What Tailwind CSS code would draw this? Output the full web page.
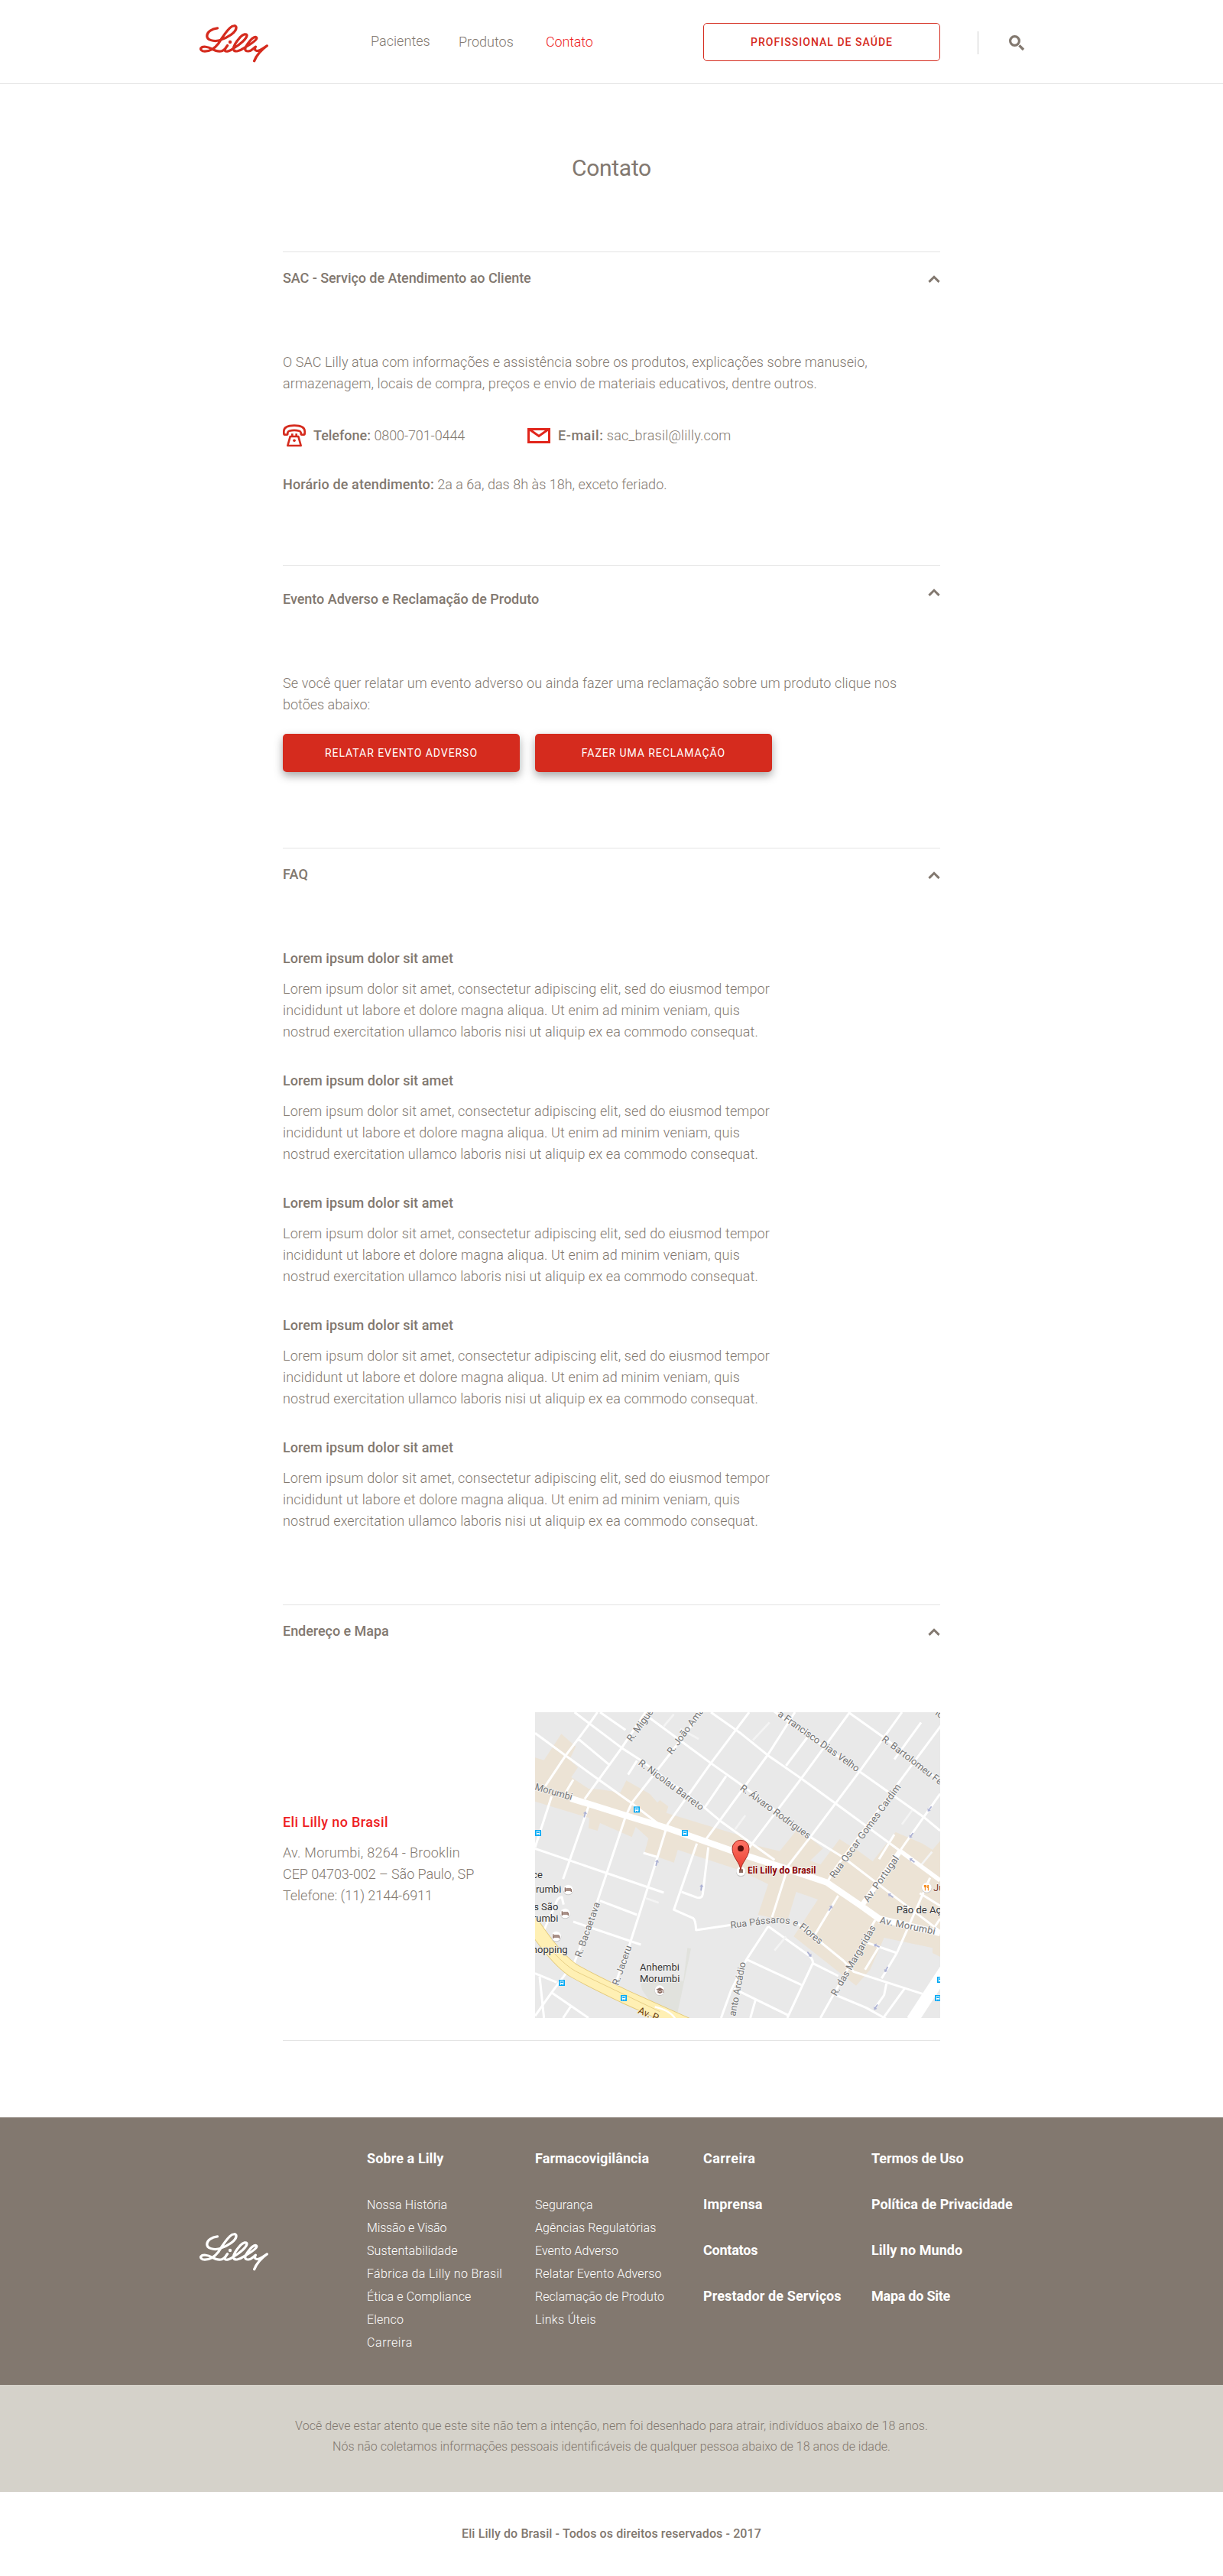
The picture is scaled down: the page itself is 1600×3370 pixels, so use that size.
<!DOCTYPE html>
<html lang="pt-BR">
<head>
<meta charset="utf-8">
<title>Contato - Lilly</title>
<script src="https://cdn.jsdelivr.net/npm/@tailwindcss/browser@4"></script>
</head>
<body class="bg-white font-[Roboto,sans-serif] text-[#82786f] text-lg leading-7 font-light">
<svg class="hidden">
  <symbol id="lilly" viewBox="0 0 90 49" overflow="visible">
    <g transform="scale(.3571 .3333) translate(-58.5 -94.5)" fill="none" stroke="currentColor" stroke-width="9.5" stroke-linecap="round" stroke-linejoin="round">
      <path d="M124 109C104 111 86 124 86 140C86 155 110 163 131 157C162 147 193 125 193 107C193 97 181 97 170 108C152 127 140 149 128 169C113 190 95 200 78 200C66 200 61 193 64 187C70 178 90 182 103 190C118 199 132 202 142 198C150 194 155 187 161 177C154 186 150 192 152 198C157 204 172 197 183 188C208 172 232 150 232 137C231 130 219 131 208 144C194 161 182 178 183 191C185 204 204 201 218 189C240 176 268 158 268 148C267 139 253 145 244 158C232 173 224 184 226 193C229 203 244 201 254 191L264 182C259 190 261 197 268 198C280 199 292 187 306 178C288 192 268 214 259 238"/>
    </g>
    <circle cx="40" cy="23" r="2.2" fill="currentColor"/>
  </symbol>
  <symbol id="caret" viewBox="0 0 16 10"><path d="M1.4 8.9L8 2.3L14.6 8.9" fill="none" stroke="#82786f" stroke-width="3"/></symbol>
</svg>

<header class="flex h-[110px] border-b border-[#e4e4e4] pl-[261px]">
  <svg class="mt-8 h-[49px] w-[90px] overflow-visible text-[#d52b1e]"><use href="#lilly"/></svg>
  <nav class="flex pt-10 pl-[134px]">
    <a class="w-[115px] tracking-[0.04px]">Pacientes</a>
    <a class="w-[113px] pt-px">Produtos</a>
    <a class="w-[207px] pt-px pl-px tracking-[-0.17px] text-[#ee1d23]">Contato</a>
  </nav>
  <a class="mt-[30px] h-[50px] w-[310px] rounded-[5px] border border-[#d52b1e] text-center text-sm leading-[48px] font-medium tracking-[1.03px] text-[#d52b1e]">PROFISSIONAL DE SAÚDE</a>
  <div class="mt-[41px] ml-[49px] h-[30px] w-px bg-[#ccc]"></div>
  <svg class="mt-[45px] ml-[39px] size-[22px]" fill="none" stroke="#82786f"><circle cx="8.5" cy="8.5" r="5.9" stroke-width="3.2"/><path d="M14.4 14.4L20 20" stroke-width="3.4"/></svg>
</header>

<main class="mx-auto w-[860px]">
  <h1 class="mt-[90px] text-center text-3xl leading-10 font-normal tracking-[-0.31px]">Contato</h1>

  <section class="mt-[89px] h-[410px] border-t border-[#e4e4e4] pt-5">
    <div class="flex justify-between">
      <h2 class="font-medium tracking-[-0.06px]">SAC - Serviço de Atendimento ao Cliente</h2>
      <svg class="mt-2.5 h-2.5 w-4"><use href="#caret"/></svg>
    </div>
    <p class="mt-[82px] whitespace-nowrap"><span class="tracking-[0.08px]">O SAC Lilly atua com informações e assistência sobre os produtos, explicações sobre manuseio,</span><br><span class="tracking-[0.13px]">armazenagem, locais de compra, preços e envio de materiais educativos, dentre outros.</span></p>
    <div class="mt-10 flex h-7">
      <svg class="-mt-px h-[30px] w-[30px]" viewBox="30 30 90 88" fill="none" stroke="#d52b1e" stroke-width="8" stroke-linejoin="round"><path d="M46 70H37Q34 70 34 65V56Q35 34 75 34Q115 34 116 56V65Q116 70 113 70H104Q101 70 101 66V62Q100 57 94 55Q75 50 56 55Q50 57 49 62V66Q49 70 46 70Z"/><path d="M59 77H91L101 113H49ZM67 66V76M83 66V76"/><circle cx="75" cy="93" r="5.5" fill="#d52b1e" stroke="none"/></svg>
      <p class="w-[290px] pl-2.5"><span class="font-medium">Telefone:</span> <span class="tracking-[-0.1px]">0800-701-0444</span></p>
      <svg class="mt-1 h-5 w-[30px]" viewBox="0 0 30 20" fill="none" stroke="#e1251b" stroke-width="3"><path d="M1.5 1.5H28.5V18.5H1.5ZM3 2L15 10.5L27 2"/></svg>
      <p class="pl-2.5"><span class="font-medium tracking-[0.55px]">E-mail:</span> <span class="tracking-[0.22px]">sac_brasil@lilly.com</span></p>
    </div>
    <p class="mt-9"><span class="font-medium tracking-[0.13px]">Horário de atendimento:</span> <span class="tracking-[0.02px]">2a a 6a, das 8h às 18h, exceto feriado.</span></p>
  </section>

  <section class="h-[370px] border-t border-[#e4e4e4] pt-[30px]">
    <div class="flex justify-between">
      <h2 class="font-medium tracking-[-0.02px]">Evento Adverso e Reclamação de Produto</h2>
      <svg class="h-2.5 w-4"><use href="#caret"/></svg>
    </div>
    <p class="mt-[82px] whitespace-nowrap"><span class="tracking-[0.106px]">Se você quer relatar um evento adverso ou ainda fazer uma reclamação sobre um produto clique nos</span><br>botões abaixo:</p>
    <div class="mt-6 flex gap-5 text-center text-sm leading-[50px] font-normal text-white">
      <a class="h-[50px] w-[310px] rounded-[5px] bg-[#d52b1e] tracking-[0.95px] shadow-[0_5px_12px_rgba(0,0,0,0.35)]">RELATAR EVENTO ADVERSO</a>
      <a class="h-[50px] w-[310px] rounded-[5px] bg-[#d52b1e] tracking-[0.92px] shadow-[0_5px_12px_rgba(0,0,0,0.35)]">FAZER UMA RECLAMAÇÃO</a>
    </div>
  </section>

  <section class="h-[990px] border-t border-[#e4e4e4] pt-5">
    <div class="flex justify-between">
      <h2 class="font-medium tracking-[0.17px]">FAQ</h2>
      <svg class="mt-2.5 h-2.5 w-4"><use href="#caret"/></svg>
    </div>
    <div class="mt-[82px] flex flex-col gap-9 whitespace-nowrap">
      <article><h3 class="mb-3 font-medium tracking-[0.06px]">Lorem ipsum dolor sit amet</h3><p class="tracking-[0.14px]">Lorem ipsum dolor sit amet, consectetur adipiscing elit, sed do eiusmod tempor<br><span class="tracking-[0.165px]">incididunt ut labore et dolore magna aliqua. Ut enim ad minim veniam, quis</span><br><span class="tracking-[0.12px]">nostrud exercitation ullamco laboris nisi ut aliquip ex ea commodo consequat.</span></p></article>
      <article><h3 class="mb-3 font-medium tracking-[0.06px]">Lorem ipsum dolor sit amet</h3><p class="tracking-[0.14px]">Lorem ipsum dolor sit amet, consectetur adipiscing elit, sed do eiusmod tempor<br><span class="tracking-[0.165px]">incididunt ut labore et dolore magna aliqua. Ut enim ad minim veniam, quis</span><br><span class="tracking-[0.12px]">nostrud exercitation ullamco laboris nisi ut aliquip ex ea commodo consequat.</span></p></article>
      <article><h3 class="mb-3 font-medium tracking-[0.06px]">Lorem ipsum dolor sit amet</h3><p class="tracking-[0.14px]">Lorem ipsum dolor sit amet, consectetur adipiscing elit, sed do eiusmod tempor<br><span class="tracking-[0.165px]">incididunt ut labore et dolore magna aliqua. Ut enim ad minim veniam, quis</span><br><span class="tracking-[0.12px]">nostrud exercitation ullamco laboris nisi ut aliquip ex ea commodo consequat.</span></p></article>
      <article><h3 class="mb-3 font-medium tracking-[0.06px]">Lorem ipsum dolor sit amet</h3><p class="tracking-[0.14px]">Lorem ipsum dolor sit amet, consectetur adipiscing elit, sed do eiusmod tempor<br><span class="tracking-[0.165px]">incididunt ut labore et dolore magna aliqua. Ut enim ad minim veniam, quis</span><br><span class="tracking-[0.12px]">nostrud exercitation ullamco laboris nisi ut aliquip ex ea commodo consequat.</span></p></article>
      <article><h3 class="mb-3 font-medium tracking-[0.06px]">Lorem ipsum dolor sit amet</h3><p class="tracking-[0.14px]">Lorem ipsum dolor sit amet, consectetur adipiscing elit, sed do eiusmod tempor<br><span class="tracking-[0.165px]">incididunt ut labore et dolore magna aliqua. Ut enim ad minim veniam, quis</span><br><span class="tracking-[0.12px]">nostrud exercitation ullamco laboris nisi ut aliquip ex ea commodo consequat.</span></p></article>
    </div>
  </section>

  <section class="h-[571px] border-y border-[#e4e4e4] pt-5">
    <div class="flex justify-between">
      <h2 class="font-medium tracking-[-0.04px]">Endereço e Mapa</h2>
      <svg class="mt-2.5 h-2.5 w-4"><use href="#caret"/></svg>
    </div>
    <div class="mt-[92px] flex">
      <div class="w-[330px] pt-[130px]">
        <h3 class="mb-3 font-medium tracking-[0.37px] text-[#ee1d23]">Eli Lilly no Brasil</h3>
        <p><span class="tracking-[0.27px]">Av. Morumbi, 8264 - Brooklin</span><br><span class="tracking-[-0.06px]">CEP 04703-002 – São Paulo, SP</span><br><span class="tracking-[-0.04px]">Telefone: (11) 2144-6911</span></p>
      </div>
      <svg class="h-[400px] w-[530px]" viewBox="30 30 1590 1200">
        <defs>
          <linearGradient id="pin" x1="0" y1="0" x2="0" y2="1"><stop offset="0" stop-color="#ff7566"/><stop offset="1" stop-color="#e83c30"/></linearGradient>
          <g id="bus"><path d="M0 0h24v24H0z" fill="#03a9f4"/><path d="M5 4h14v13H5z" fill="#fff"/><path d="M7 7h10v5H7z" fill="#03a9f4"/><path d="M6 17h3v3H6zM15 17h3v3h-3z" fill="#fff"/></g>
          <g id="bed"><circle r="20" cy="2" fill="#c9c9c9"/><circle r="19" fill="#fff"/><path d="M-12-8V9M-12 3H12M12-2V9M-9-3h20" fill="none" stroke="#8d6e63" stroke-width="4"/></g>
          <path id="arr" d="M0-12L8-2H3L2 13H-3V-2H-8Z" fill="#adb2d4"/>
          <path id="passaros" d="M798 878C880 870 960 850 1030 862C1068 870 1090 900 1160 952"/>
        </defs>
        <path d="M30 30h1590v1200H30z" fill="#e9e9e9"/>
        <path d="M445 1095L530 1075L612 1085L628 955L642 958L585 1230L500 1190L450 1120Z" fill="#e1e2dd"/>
        <path d="M30 208L65 218L133 115L190 165L165 215L198 247L172 285L240 330L285 333L365 345L388 298L480 350L510 385L520 375L553 400L545 425L840 515L885 550L990 575L1055 495L1112 525L1160 565L1110 612L1150 628L1225 528L1300 575L1355 615L1445 500L1550 545L1590 570L1620 535V990L1590 975V955L1400 915L1345 1040L1290 1103L1045 910L1140 765L1055 735L1020 850L905 825L945 705L835 650L590 570L575 620L460 580L475 525L425 480L410 520L285 465L275 495L240 485L243 445L30 380Z" fill="#ece3d5"/>
        <g fill="none" stroke="#fff" stroke-width="9" stroke-linejoin="round">
          <path d="M720 30L840 115L945 200L1075 290L1205 385L1460 572M185 30L370 170L440 215L690 400L755 455L970 610M285 30L385 100M470 45L720 230L840 315L1110 520L1240 600L1430 745L1620 890M30 112L150 200L280 295L400 380L510 465M930 0L1300 260L1560 445L1620 495M1260 30L1400 130L1620 300"/>
          <path d="M275 30L240 80L150 200L70 320M470 20L370 170L225 370M240 400L140 685M690 20L570 180L410 385L385 440L275 770L185 1010L95 1130L30 1222M870 30L720 230L550 470L510 600L400 945L340 1110M1050 30L945 195L755 455L700 530M665 545L575 805L650 838Q660 845 662 885L800 865M710 560L688 745Q685 762 665 757L605 735M1265 30L1075 290L860 575M1470 30L1305 260L1110 520L1025 630L960 835M1625 80L1410 370L1210 640L1175 700M1620 350L1465 570M1545 70L1440 215M1105 120L1015 240M780 280L695 405M200 135L320 235M180 295L150 345M430 220L395 275M95 360L30 560"/>
          <path d="M30 565L535 738M285 770L430 825M180 852L445 942M455 582L510 598M1220 750L1130 900M1365 845L1150 1230M945 870L1105 985Q1122 1000 1120 1015L1020 1230M1120 1015L1220 1065M945 870L860 1000L800 1120L760 1230M860 1000L1075 1100M810 1115L1025 1220M895 1160L875 1230M1050 850L1240 1005L1280 1048L1550 1135M1210 1140L1330 1190L1410 1235M1410 1090L1400 1140L1365 1190M1480 1115L1400 1225M1335 935L1450 975M1390 1075L1450 975L1580 680M1325 1040L1380 950M1380 607L1440 510M1540 740L1620 790M1600 870L1620 840M30 1055L115 1090M48 1068L65 1230M95 1130L240 1230M170 1185L140 1230M65 885L110 785Q118 755 135 755L142 785"/>
        </g>
        <g fill="none" stroke="#f4f4f4" stroke-width="8"><path d="M950 70L885 140M1015 910L970 965M575 38L535 85M600 95L672 135M465 760L515 778M855 435L815 490M1510 415L1470 470M1588 578L1545 630"/></g>
        <g fill="none" stroke="#fff" stroke-linejoin="round">
          <path d="M170 368L385 435L550 485L835 585L990 635L1175 698L1310 790L1380 840L1620 897" stroke-width="25"/>
          <path d="M1460 572L1620 690" stroke-width="17"/><path d="M1465 572L1308 795" stroke-width="20"/>
          <path d="M1660 1010L1510 1240" stroke-width="48"/>
        </g>
        <g fill="none">
          <path d="M10 845Q100 985 175 1040Q220 1068 380 1145L640 1262" stroke="#e3c877" stroke-width="56"/>
          <path d="M10 845Q100 985 175 1040Q220 1068 380 1145L640 1262" stroke="#fff0b4" stroke-width="51"/>
          <path d="M100 970Q150 1025 190 1047L520 1205" stroke="#e8cf85" stroke-width="3"/>
          <path d="M500 1186Q560 1200 580 1232" stroke="#fff" stroke-width="7"/>
        </g>
        <g>
          <use href="#arr" transform="translate(226 430) rotate(12)"/><use href="#arr" transform="translate(508 620) rotate(14)"/><use href="#arr" transform="translate(683 717) rotate(6)"/><use href="#arr" transform="translate(1190 798) rotate(30)"/><use href="#arr" transform="translate(1578 410) rotate(215)"/><use href="#arr" transform="translate(1506 514) rotate(215)"/><use href="#arr" transform="translate(1509 611) rotate(-55)"/><use href="#arr" transform="translate(1425 749) rotate(-55)"/><use href="#arr" transform="translate(1370 946) rotate(-68)"/><use href="#arr" transform="translate(1408 1040) rotate(208)"/><use href="#arr" transform="translate(1367 1188) rotate(212)"/><use href="#arr" transform="translate(1107 981) rotate(140)"/>
        </g>
        <g font-family="Roboto" font-size="38" font-weight="400" fill="#747474" stroke="#f4f4f4" stroke-width="5" paint-order="stroke">
          <text transform="translate(409 148) rotate(-54)">R. Migue</text>
          <text transform="translate(566 198) rotate(-53.5)">R. João Ama</text>
          <text transform="translate(433 234) rotate(36.5)" textLength="308">R. Nicolau Barreto</text>
          <text transform="translate(27 334) rotate(16)" textLength="151">Morumbi</text>
          <text transform="translate(210 994) rotate(-70.5)" textLength="226">R. Bacaetava</text>
          <text transform="translate(357 1104) rotate(-71)" textLength="162">R. Jaceru</text>
          <text transform="translate(857 1013) rotate(-79)" text-anchor="end">anto Arcádio</text>
          <text transform="translate(832 333) rotate(36)" textLength="332">R. Álvaro Rodrigues</text>
          <text transform="translate(1292 265) rotate(35.5)" text-anchor="end">a Francisco Dias Velho</text>
          <text transform="translate(1388 140) rotate(37.5)">R. Bartolomeu Fe</text>
          <text transform="translate(1205 684) rotate(-54)" textLength="446">Rua Oscar Gomes Cardim</text>
          <text transform="translate(1338 778) rotate(-55)" textLength="212">Av. Portugal</text>
          <text transform="translate(1212 1146) rotate(-60)" textLength="312">R. das Margaridas</text>
          <text transform="translate(1381 858) rotate(11.5)" textLength="222">Av. Morumbi</text>
          <text transform="translate(1598 38) rotate(36)">lo</text>
          <text><textPath href="#passaros">Rua Pássaros e Flores</textPath></text>
          <text transform="translate(432 1210) rotate(23)" fill="#6b3f16" stroke="#fff0b4">Av. P</text>
        </g>
        <g font-family="Roboto" font-size="39" font-weight="400" fill="#333" stroke="#f4f4f4" stroke-width="4" paint-order="stroke">
          <text x="60" y="680" text-anchor="end">ce</text>
          <text x="133" y="738" text-anchor="end">rumbi</text>
          <text x="121" y="806" text-anchor="end">s São</text>
          <text x="121" y="852" text-anchor="end">rumbi</text>
          <text x="158" y="976" text-anchor="end">hopping</text>
          <text x="441" y="1043" textLength="156">Anhembi</text>
          <text x="441" y="1089" textLength="157">Morumbi</text>
          <text x="1448" y="818">Pão de Aç</text>
          <text x="1593" y="732" fill="#7a3b2a">Ju</text>
        </g>
        <use href="#bus" x="417" y="400"/><use href="#bus" x="30" y="492"/><use href="#bus" x="606" y="492"/><use href="#bus" x="123" y="1080"/><use href="#bus" x="366" y="1140"/><use href="#bus" x="1608" y="1068"/><use href="#bus" x="1599" y="1140"/>
        <use href="#bed" x="160" y="726"/><use href="#bed" x="148" y="819"/><use href="#bed" x="113" y="909"/>
        <circle cx="519" cy="1123" r="20" fill="#c9c9c9"/><circle cx="519" cy="1121" r="19" fill="#fff"/><path d="M505 1118L520 1111L534 1118L520 1126ZM511 1123V1130L520 1135L529 1130V1123L520 1128ZM531 1119H534V1131H531Z" fill="#8d6e63"/>
        <circle cx="1567" cy="720" r="20" fill="#c9c9c9"/><circle cx="1567" cy="718" r="19" fill="#fff"/><path d="M1558 708V716H1564V708M1561 708V730M1573 730V708Q1569 710 1569 718H1573" fill="none" stroke="#f57c00" stroke-width="3"/>
        <circle cx="838" cy="657" r="19" fill="#c9c9c9"/><circle cx="838" cy="654" r="18" fill="#fff"/><path d="M831 646h15v14h-15z" fill="#8d6e63"/>
        <path d="M837 650C834 618 804 600 804 565A33 33 0 0 1 870 565C870 600 840 618 837 650Z" fill="url(#pin)" stroke="#a5281f" stroke-width="3"/><circle cx="837" cy="565" r="12" fill="#5a0f0c"/>
        <text x="864" y="664" textLength="268" font-family="Roboto" font-size="36" font-weight="700" fill="#8b0000" stroke="#f4f4f4" stroke-width="5" paint-order="stroke">Eli Lilly do Brasil</text>
      </svg>
    </div>
  </section>
</main>

<footer class="mt-[100px]">
  <div class="flex h-[350px] bg-[#82786f] pl-[261px] whitespace-nowrap text-white">
    <svg class="mt-[151px] h-[49px] w-[90px] overflow-visible"><use href="#lilly"/></svg>
    <div class="ml-[129px] grid grid-cols-[220px_220px_220px_220px] pt-10 font-bold">
      <div>
        <h4 class="tracking-[0.1px]">Sobre a Lilly</h4>
        <ul class="mt-8 text-base leading-[30px] font-light tracking-[0.12px]">
          <li>Nossa História</li><li class="tracking-[-0.15px]">Missão e Visão</li><li>Sustentabilidade</li><li class="tracking-[0.34px]">Fábrica da Lilly no Brasil</li><li>Ética e Compliance</li><li class="tracking-[0.2px]">Elenco</li><li class="tracking-[0.6px]">Carreira</li>
        </ul>
      </div>
      <div>
        <h4 class="tracking-[0.09px]">Farmacovigilância</h4>
        <ul class="mt-8 text-base leading-[30px] font-light tracking-[0.1px]">
          <li>Segurança</li><li>Agências Regulatórias</li><li class="tracking-[0.02px]">Evento Adverso</li><li class="tracking-[0.15px]">Relatar Evento Adverso</li><li class="tracking-[0.04px]">Reclamação de Produto</li><li class="tracking-[0.33px]">Links Úteis</li>
        </ul>
      </div>
      <ul class="flex flex-col gap-8">
        <li class="tracking-[0.45px]">Carreira</li><li class="tracking-[0.2px]">Imprensa</li><li class="tracking-[-0.23px]">Contatos</li><li class="tracking-[0.1px]">Prestador de Serviços</li>
      </ul>
      <ul class="flex flex-col gap-8">
        <li class="tracking-[-0.09px]">Termos de Uso</li><li class="tracking-[-0.03px]">Política de Privacidade</li><li class="tracking-[0.05px]">Lilly no Mundo</li><li class="tracking-[-0.25px]">Mapa do Site</li>
      </ul>
    </div>
  </div>
  <div class="h-[140px] bg-[#d5d2ca] pt-10 text-center text-base leading-[27px]">
    <p class="tracking-[0.07px]">Você deve estar atento que este site não tem a intenção, nem foi desenhado para atrair, indivíduos abaixo de 18 anos.</p>
    <p>Nós não coletamos informações pessoais identificáveis de qualquer pessoa abaixo de 18 anos de idade.</p>
  </div>
  <p class="pt-[41px] text-center text-base leading-[27px] font-medium tracking-[0.11px]">Eli Lilly do Brasil - Todos os direitos reservados - 2017</p>
</footer>
</body>
</html>
